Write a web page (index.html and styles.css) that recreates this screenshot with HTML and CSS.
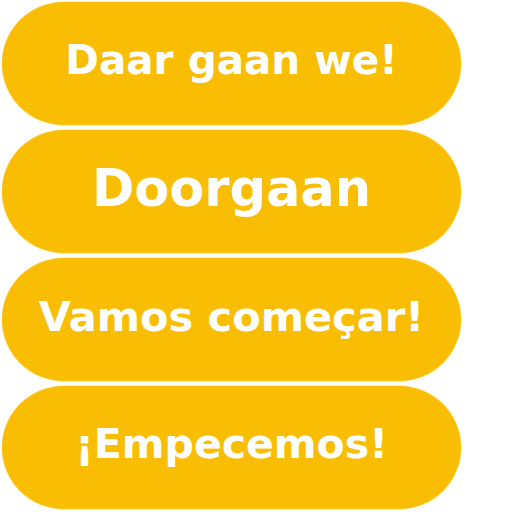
FILE: index.html
```html
<!DOCTYPE html>
<html>
<head>
<meta charset="utf-8">
<link rel="stylesheet" href="styles.css">
</head>
<body>
<div class="stack">
  <button class="pill pill-a">Daar gaan we!</button>
  <button class="pill pill-b">Doorgaan</button>
  <button class="pill pill-c">Vamos começar!</button>
  <button class="pill pill-d">¡Empecemos!</button>
</div>
</body>
</html>
```

FILE: styles.css
```css
html, body {
  margin: 0;
  padding: 0;
  background: #ffffff;
}
.stack {
  display: flex;
  flex-direction: column;
  gap: 5px;
  padding: 2px;
}
.pill {
  width: 459px;
  height: 123px;
  border: none;
  border-radius: 62px;
  background: #f9be03;
  color: #ffffff;
  font-family: "DejaVu Sans", sans-serif;
  font-weight: 700;
  display: flex;
  align-items: center;
  justify-content: center;
  padding: 0 0 6px 0;
  line-height: 1;
  box-shadow: 0 0 2px rgba(249, 190, 3, 0.5);
}
.pill-a { font-size: 40.5px; }
.pill-b { font-size: 51px; }
.pill-c { font-size: 41.5px; }
.pill-d { font-size: 41px; }
```
